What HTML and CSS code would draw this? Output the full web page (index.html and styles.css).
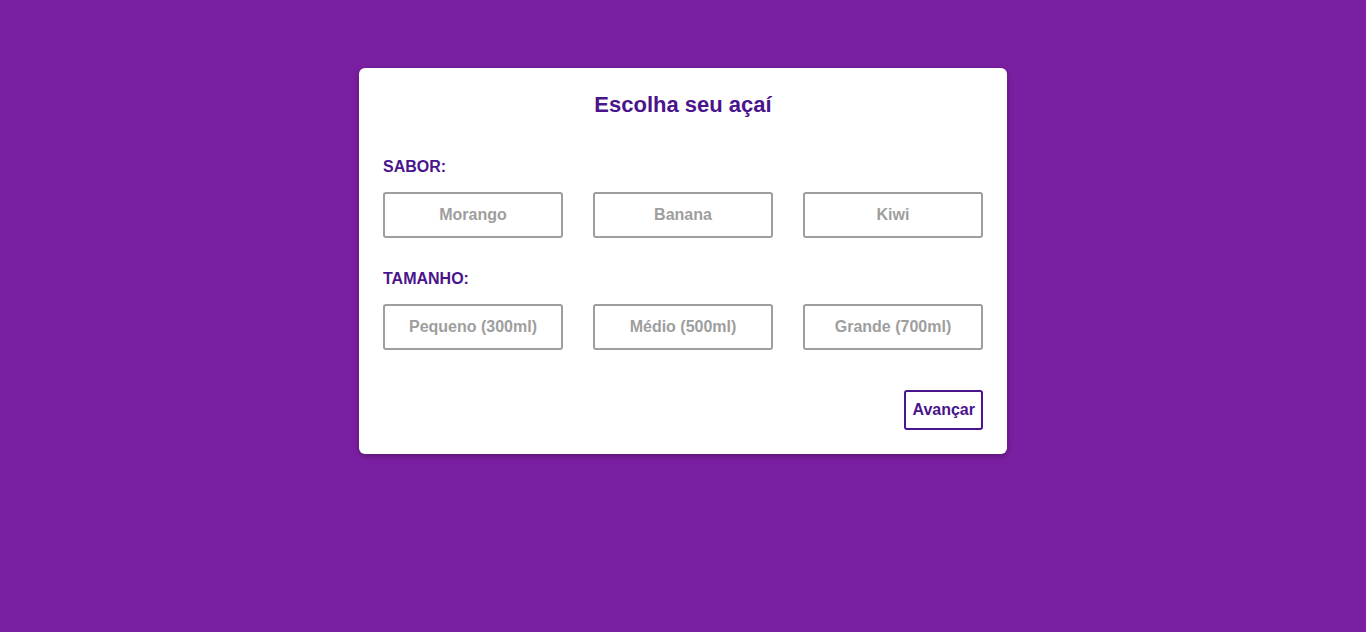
FILE: index.html
```html
<!DOCTYPE html>
<html lang="pt-BR">
<head>
<meta charset="utf-8">
<title>Escolha seu açaí</title>
<link rel="stylesheet" href="styles.css">
</head>
<body>
<main class="card">
  <h1 class="title">Escolha seu açaí</h1>
  <section class="group">
    <h2 class="label">SABOR:</h2>
    <div class="options">
      <button class="option">Morango</button>
      <button class="option">Banana</button>
      <button class="option">Kiwi</button>
    </div>
  </section>
  <section class="group">
    <h2 class="label">TAMANHO:</h2>
    <div class="options">
      <button class="option">Pequeno (300ml)</button>
      <button class="option">Médio (500ml)</button>
      <button class="option">Grande (700ml)</button>
    </div>
  </section>
  <div class="actions">
    <button class="next">Avançar</button>
  </div>
</main>
</body>
</html>
```
FILE: styles.css
```css
* { box-sizing: border-box; }
html, body { margin: 0; padding: 0; }
body {
  background: #7b1fa2;
  font-family: "Liberation Sans", Arial, sans-serif;
  min-height: 632px;
  padding-top: 68px;
}
.card {
  width: 648px;
  margin: 0 auto;
  background: #fff;
  border-radius: 6px;
  padding: 24px;
  box-shadow: 0 2px 6px rgba(0, 0, 0, 0.3);
}
.title {
  margin: 0 0 41px;
  text-align: center;
  font-size: 22px;
  line-height: 25px;
  font-weight: bold;
  color: #4a148c;
}
.group { margin-bottom: 32px; }
.group:last-of-type { margin-bottom: 40px; }
.label {
  margin: 0 0 16px;
  font-size: 16px;
  line-height: 18px;
  font-weight: bold;
  color: #4a148c;
}
.options {
  display: flex;
  gap: 30px;
}
.option {
  width: 180px;
  height: 46px;
  background: #fff;
  border: 2px solid #9e9e9e;
  border-radius: 3px;
  font-family: inherit;
  font-size: 16px;
  font-weight: bold;
  color: #9e9e9e;
  padding: 0;
}
.actions {
  display: flex;
  justify-content: flex-end;
}
.next {
  height: 40px;
  padding: 0 6px;
  background: #fff;
  border: 2px solid #4a148c;
  border-radius: 3px;
  font-family: inherit;
  font-size: 16px;
  font-weight: bold;
  color: #4a148c;
}
```
